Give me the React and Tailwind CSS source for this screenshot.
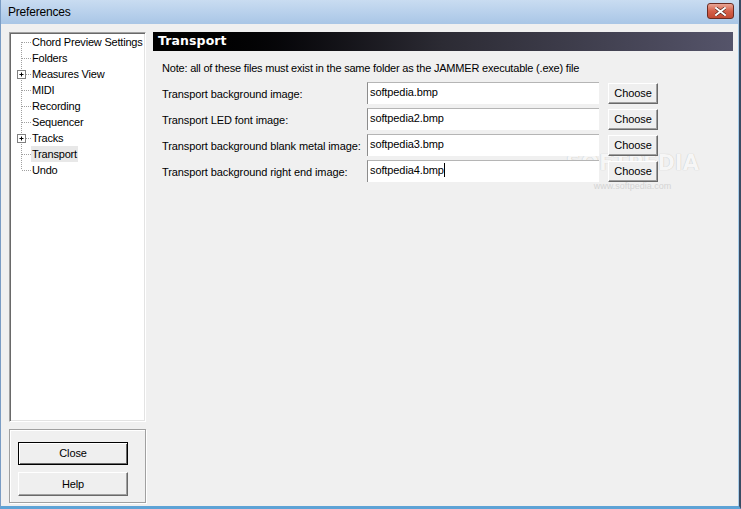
import React from 'react'

const FONT = { fontFamily: '"Liberation Sans", Arial, sans-serif' }

const TREE = [
  { label: 'Chord Preview Settings' },
  { label: 'Folders' },
  { label: 'Measures View', plus: true },
  { label: 'MIDI' },
  { label: 'Recording' },
  { label: 'Sequencer' },
  { label: 'Tracks', plus: true },
  { label: 'Transport', selected: true },
  { label: 'Undo' },
]

const FILES = [
  { label: 'Transport background image:', value: 'softpedia.bmp' },
  { label: 'Transport LED font image:', value: 'softpedia2.bmp' },
  { label: 'Transport background blank metal image:', value: 'softpedia3.bmp' },
  { label: 'Transport background right end image:', value: 'softpedia4.bmp', caret: true },
]

function TreeLines({ first, last, plus }) {
  return (
    <svg width="20" height="16" viewBox="0 0 20 16" className="shrink-0">
      <line x1="10.5" y1={first ? 8 : 0} x2="10.5" y2={last ? 8 : 16}
        stroke="#a0a0a0" strokeDasharray="1 1" />
      <line x1="11" y1="8.5" x2="20" y2="8.5" stroke="#a0a0a0" strokeDasharray="1 1" />
      {plus && (
        <g>
          <rect x="6.5" y="4.5" width="8" height="8" fill="#fff" stroke="#808080" />
          <line x1="8.5" y1="8.5" x2="12.5" y2="8.5" stroke="#000" />
          <line x1="10.5" y1="6.5" x2="10.5" y2="10.5" stroke="#000" />
        </g>
      )}
    </svg>
  )
}

function ClassicButton({ children, className = '', isDefault }) {
  return (
    <div className={`relative z-10 flex items-center justify-center bg-[#efefef] text-[11px] text-black tracking-[-0.1px] whitespace-nowrap ${
      isDefault
        ? 'border border-black shadow-[inset_1px_1px_0_#fff,inset_-1px_-1px_0_#696969]'
        : 'border border-t-white border-l-white border-r-[#696969] border-b-[#696969] shadow-[inset_-1px_-1px_0_#a0a0a0]'
    } ${className}`}>
      {children}
    </div>
  )
}

export default function App() {
  return (
    <div className="w-[741px] h-[509px] flex flex-col overflow-hidden bg-[#f0f0f0] relative" style={FONT}>
      {/* watermark, sits under the controls */}
      <div className="absolute left-[566px] top-[151px] flex flex-col items-center pointer-events-none">
        <span className="text-[21px] font-bold leading-[24px] text-[#f6f6f6] [text-shadow:0_0_1px_#b8b8b8]" style={{ fontFamily: '"DejaVu Sans", sans-serif' }}>SOFTPEDIA</span>
        <span className="text-[9px] text-[#d4d4d4] mt-[5px]">www.softpedia.com</span>
      </div>

      {/* title bar */}
      <div className="h-[24px] shrink-0 flex items-center justify-between pl-[7px] pr-[5px] bg-gradient-to-b from-[#c9dcf1] to-[#a9c6e6] border-l border-r-2 border-[#7a9cc4] border-r-[#394b63]">
        <span className="text-[12px] text-black tracking-[-0.2px]">Preferences</span>
        <div className="w-[27px] h-[16px] mb-[2px] rounded-[3px] border border-[#6b2b22] bg-gradient-to-b from-[#e8a596] via-[#d5604a] to-[#c24a33] flex items-center justify-center">
          <svg width="11" height="9" viewBox="0 0 11 9">
            <path d="M1 1 L10 8 M10 1 L1 8" stroke="#4a1d16" strokeWidth="3.2" strokeLinecap="square" />
            <path d="M1 1 L10 8 M10 1 L1 8" stroke="#fff" strokeWidth="2" strokeLinecap="square" />
          </svg>
        </div>
      </div>

      {/* body */}
      <div className="relative flex-1 flex gap-[7px] pl-[8px] pr-[6px] pt-[8px] pb-[3px] border-l border-l-[#7a9cc4] border-r-2 border-r-[#394b63] border-b-[3px] border-b-[#5ea3d6] shadow-[inset_-1px_0_0_#a8cce8]">
        {/* left column */}
        <div className="w-[137px] flex flex-col gap-[7px]">
          <div className="h-[390px] bg-white border border-t-[#a0a0a0] border-l-[#a0a0a0] border-r-white border-b-white shadow-[inset_1px_1px_0_#696969,inset_-1px_-1px_0_#e3e3e3] pt-[1px] pl-[1px]">
            {TREE.map((t, i) => (
              <div key={t.label} className="h-[16px] flex items-center">
                <TreeLines first={i === 0} last={i === TREE.length - 1} plus={t.plus} />
                <span className={`text-[11px] leading-[16px] tracking-[-0.2px] whitespace-nowrap text-black px-[1px] ${t.selected ? 'bg-[#e8e8e8]' : ''}`}>
                  {t.label}
                </span>
              </div>
            ))}
          </div>
          <div className="flex-1 border border-[#a0a0a0] shadow-[inset_1px_1px_0_#fff,1px_1px_0_#fff] flex flex-col gap-[7px] pl-[8px] pt-[12px]">
            <ClassicButton isDefault className="w-[110px] h-[23px]">Close</ClassicButton>
            <ClassicButton className="w-[110px] h-[24px]">Help</ClassicButton>
          </div>
        </div>

        {/* right panel */}
        <div className="w-[580px] flex flex-col">
          <div className="h-[19px] bg-gradient-to-r from-[#000000] via-[#2c2b34] to-[#55546a] flex items-center pl-[5px]">
            <span className="text-white font-bold text-[12.5px] tracking-[0.1px]" style={{ fontFamily: '"DejaVu Sans", Verdana, sans-serif' }}>
              Transport
            </span>
          </div>
          <div className="pl-[9px] pt-[10px] text-[11px] text-black tracking-[-0.2px] leading-[14px] whitespace-nowrap">
            Note: all of these files must exist in the same folder as the JAMMER executable (.exe) file
          </div>
          <div className="flex flex-col gap-[4px] pt-[7px] pl-[9px]">
            {FILES.map(f => (
              <div key={f.label} className="h-[22px] flex items-center">
                <div className="w-[205px] text-[11px] tracking-[-0.1px] whitespace-nowrap text-black pt-[2px]">{f.label}</div>
                <div className="relative z-10 w-[232px] h-[22px] bg-white border-t border-l border-t-[#b5b5b5] border-l-[#8c8c8c] pl-[2px] pt-[1px] text-[11px] tracking-[-0.1px] leading-[16px] text-black flex items-start">
                  <span>{f.value}</span>
                  {f.caret && <span className="w-px h-[14px] bg-black mt-[1px]" />}
                </div>
                <ClassicButton className="w-[50px] h-[21px] ml-[9px]">Choose</ClassicButton>
              </div>
            ))}
          </div>
        </div>
      </div>
    </div>
  )
}
